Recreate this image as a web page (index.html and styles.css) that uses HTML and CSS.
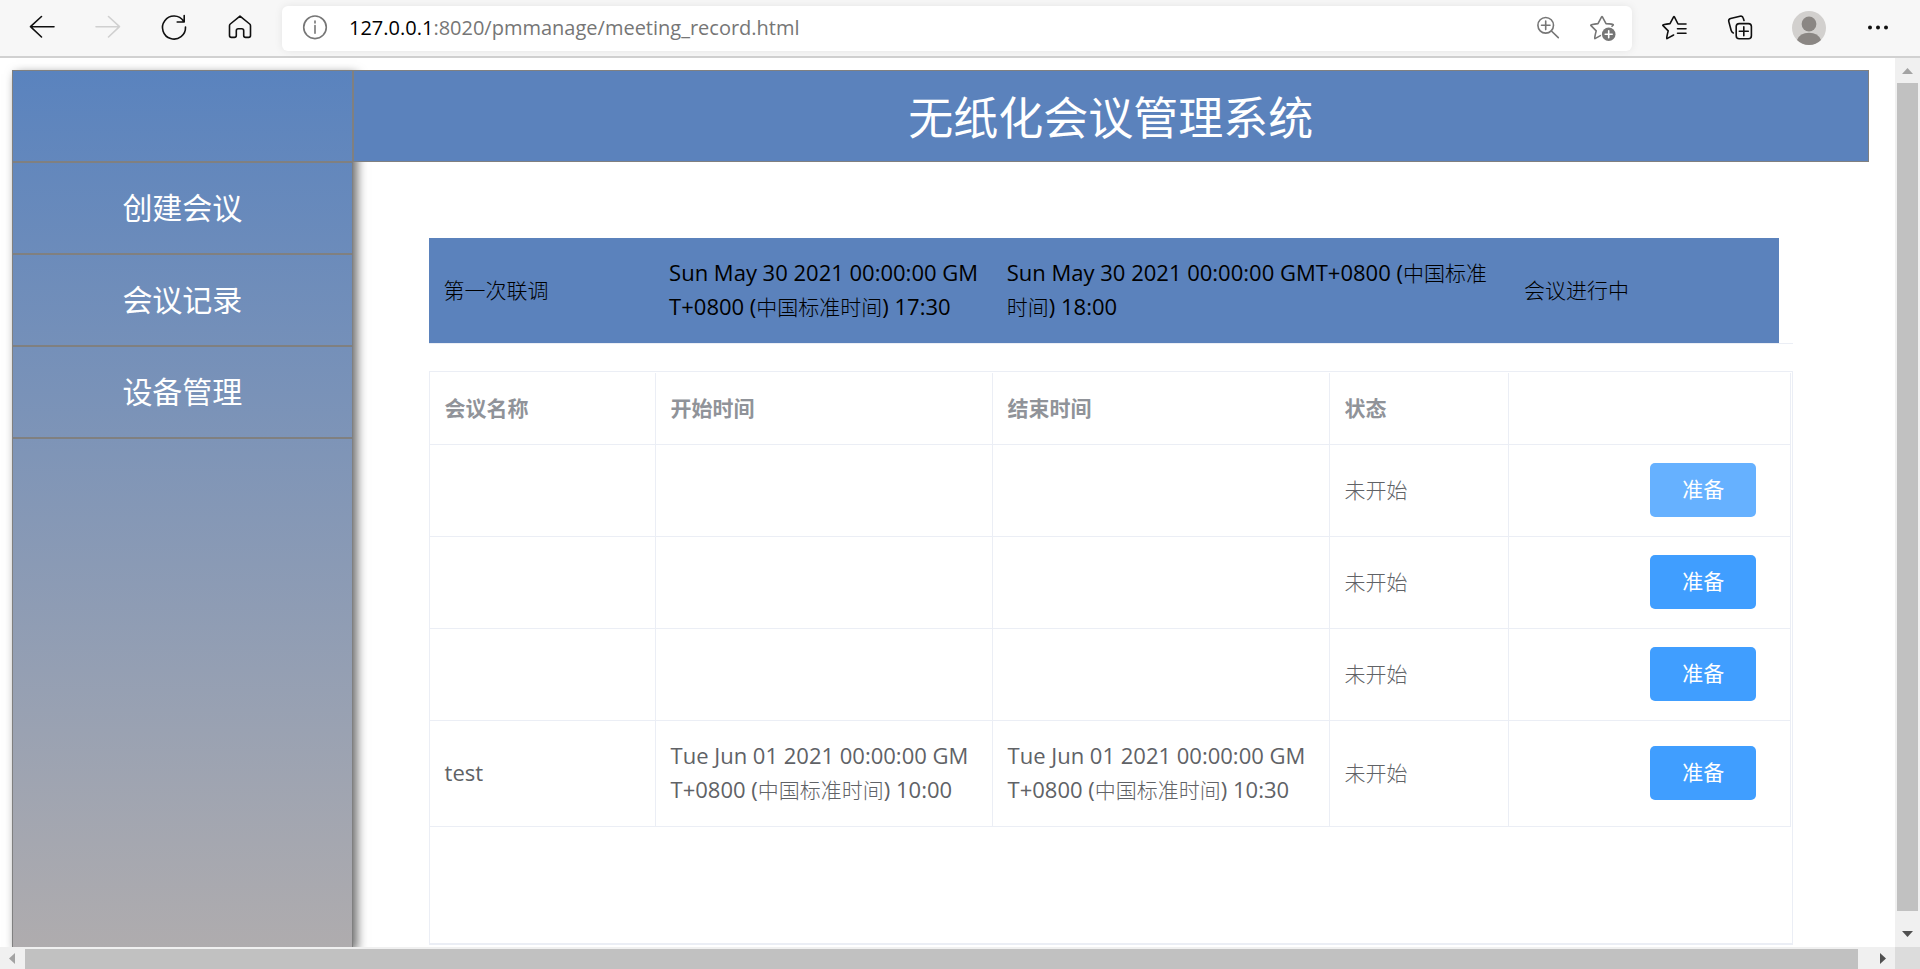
FILE: index.html
```html
<!DOCTYPE html>
<html lang="zh-CN">
<head>
<meta charset="utf-8">
<title>无纸化会议管理系统</title>
<link rel="stylesheet" href="styles.css">
</head>
<body>
<div class="toolbar">
  <button class="tool" aria-label="后退"><svg class="icon" viewBox="0 0 36 36"><path d="M30 16.7H6.5M17.5 6.5L6.5 16.7L17.5 27"/></svg></button>
  <button class="tool tool-off" aria-label="前进"><svg class="icon" viewBox="0 0 36 36"><path d="M6 16.7H29.5M18.5 6.5L29.5 16.7L18.5 27"/></svg></button>
  <button class="tool" aria-label="刷新"><svg class="icon" viewBox="0 0 36 36"><path d="M29.5 17A11.5 11.5 0 1 1 27.6 11.2M28.2 5.5V12H21.2"/></svg></button>
  <button class="tool" aria-label="主页"><svg class="icon" viewBox="0 0 36 36"><path d="M18 6.2L8.3 14Q7.5 14.7 7.5 15.7V25.5Q7.5 27.4 9.4 27.4H12.4Q14.3 27.4 14.3 25.5V20.7Q14.3 18.8 16.2 18.8H19.8Q21.7 18.8 21.7 20.7V25.5Q21.7 27.4 23.6 27.4H26.6Q28.5 27.4 28.5 25.5V15.7Q28.5 14.7 27.7 14Z"/></svg></button>
  <div class="address">
    <svg class="icon icon-gray" viewBox="0 0 36 36"><circle cx="18" cy="17.3" r="11.3"/><path d="M18 15.5V23.3M18 11V13"/></svg>
    <div class="url"><span class="host">127.0.0.1</span>:8020/pmmanage/meeting_record.html</div>
    <button class="tool tool-in" aria-label="缩放"><svg class="icon" viewBox="0 0 36 36"><circle cx="15.7" cy="15.3" r="7.8"/><path d="M21.4 21L28.3 27.6M11.5 15.3H20M15.7 11V19.6"/></svg></button>
    <button class="tool tool-in" aria-label="收藏"><svg class="icon" viewBox="0 0 36 36"><path d="M16.4 25.6L11 28.6Q10.2 28.6 12.2 20.9L6.8 15.4Q6.3 14.4 14 13.6L17.6 6.9Q18 6.3 18.4 6.9L22 13.6Q29.5 14 29.3 15L28 16.3"/><circle class="solid" cx="24.7" cy="24.3" r="6.8"/><path class="cut" d="M21.2 24.3H28.2M24.7 20.8V27.8"/></svg></button>
  </div>
  <button class="tool" aria-label="收藏夹"><svg class="icon" viewBox="0 0 36 36"><path d="M17.6 25L11 28.6Q10.2 28.6 12.2 20.9L6.8 15.4Q6.3 14.4 14 13.6L17.6 6.9Q18 6.3 18.4 6.9L22 14H30M21.5 18.7H30M21.5 23.3H30"/></svg></button>
  <button class="tool" aria-label="集锦"><svg class="icon" viewBox="0 0 36 36"><rect x="14.2" y="13.6" width="15.2" height="15.2" rx="3"/><path d="M21.8 16.8V25.8M17.3 21.3H26.3M22 10.500L21.2 8Q20.6 5.6 18 6.2L8.6 8.5Q6.2 9.2 6.8 11.6L9.2 20.5Q9.7 22.3 11.3 23"/></svg></button>
  <button class="tool tool-user" aria-label="个人资料"><svg class="icon avatar" viewBox="0 0 36 36"><circle class="face" cx="18" cy="18" r="17"/><circle class="person" cx="18" cy="14" r="7.4"/><path class="person" d="M6 30Q9 22.8 18 22.8T30 30Q25 35 18 35T6 30Z"/></svg></button>
  <button class="tool" aria-label="更多"><svg class="icon" viewBox="0 0 36 36"><g class="dots"><circle cx="10" cy="17.6" r="2"/><circle cx="18" cy="17.6" r="2"/><circle cx="26" cy="17.6" r="2"/></g></svg></button>
</div>
<div class="window">
  <div class="page">
    <nav class="side">
      <div class="side-item"></div>
      <a class="side-item" href="#create">创建会议</a>
      <a class="side-item" href="#record">会议记录</a>
      <a class="side-item" href="#device">设备管理</a>
    </nav>
    <main class="main">
      <h1 class="title">无纸化会议管理系统</h1>
      <div class="content">
        <div class="current">
          <table class="current-table">
            <colgroup><col class="cur-name"><col class="cur-start"><col class="cur-end"><col></colgroup>
            <tr>
              <td>第一次联调</td>
              <td><span class="latin">Sun May 30 2021 00:00:00 GM<br>T+0800 (</span>中国标准时间<span class="latin">) 17:30</span></td>
              <td><span class="latin">Sun May 30 2021 00:00:00 GMT+0800 (</span>中国标准<br>时间<span class="latin">) 18:00</span></td>
              <td>会议进行中</td>
            </tr>
          </table>
        </div>
        <div class="records">
          <table class="record-table">
            <colgroup><col class="rec-name"><col class="rec-time"><col class="rec-time"><col class="rec-state"><col></colgroup>
            <thead>
              <tr><th>会议名称</th><th>开始时间</th><th>结束时间</th><th>状态</th><th></th></tr>
            </thead>
            <tbody>
              <tr><td></td><td></td><td></td><td>未开始</td><td class="action"><button class="prepare prepare-hover">准备</button></td></tr>
              <tr><td></td><td></td><td></td><td>未开始</td><td class="action"><button class="prepare">准备</button></td></tr>
              <tr><td></td><td></td><td></td><td>未开始</td><td class="action"><button class="prepare">准备</button></td></tr>
              <tr>
                <td><span class="latin">test</span></td>
                <td><span class="latin">Tue Jun 01 2021 00:00:00 GM<br>T+0800 (</span>中国标准时间<span class="latin">) 10:00</span></td>
                <td><span class="latin">Tue Jun 01 2021 00:00:00 GM<br>T+0800 (</span>中国标准时间<span class="latin">) 10:30</span></td>
                <td>未开始</td>
                <td class="action"><button class="prepare">准备</button></td>
              </tr>
            </tbody>
          </table>
        </div>
      </div>
    </main>
  </div>
  <div class="scroll scroll-v">
    <svg class="arrow arrow-dim" viewBox="0 0 25 25"><path d="M7 16L12.500 10L18 16Z"/></svg>
    <div class="thumb"></div>
    <svg class="arrow" viewBox="0 0 25 25"><path d="M7 9L12.500 15L18 9Z"/></svg>
  </div>
  <div class="scroll scroll-h">
    <svg class="arrow arrow-dim" viewBox="0 0 25 25"><path d="M15 6L9 11.500L15 17Z"/></svg>
    <div class="thumb"></div>
    <svg class="arrow" viewBox="0 0 25 25"><path d="M10 6L16 11.500L10 17Z"/></svg>
  </div>
  <div class="corner"></div>
</div>
</body>
</html>
```
FILE: styles.css
```css
* {
  box-sizing: border-box;
}

body {
  margin: 0;
  height: 100vh;
  display: flex;
  flex-direction: column;
  overflow: hidden;
  background: #fff;
  font-family: "Open Sans", "Noto Sans CJK SC", sans-serif;
  font-size: 21px;
}

button {
  border: 0;
  padding: 0;
  background: none;
  font: inherit;
}

/* Browser toolbar */
.toolbar {
  flex: none;
  display: flex;
  align-items: center;
  height: 58px;
  padding: 0 9px;
  background: #f7f7f7;
  border-bottom: 2px solid #d1d1d1;
}

.tool {
  flex: none;
  display: flex;
  justify-content: center;
  width: 66px;
  color: #101010;
}

.tool-off {
  color: #d0d0d0;
}

.tool-in {
  width: 54px;
  color: #767676;
}

.tool-user {
  width: 72px;
}

.icon {
  flex: none;
  display: block;
  width: 36px;
  height: 36px;
  fill: none;
  stroke: currentColor;
  stroke-width: 1.6;
  stroke-linecap: round;
  stroke-linejoin: round;
}

.icon-gray {
  color: #767676;
}

.icon .solid,
.icon .dots {
  fill: currentColor;
  stroke: none;
}

.icon .cut {
  stroke: #fff;
}

.icon .face {
  fill: #d2d0ce;
  stroke: none;
}

.icon .person {
  fill: #8a8683;
  stroke: none;
}

.address {
  flex: 1;
  display: flex;
  align-items: center;
  height: 45px;
  margin: 0 9px;
  padding: 0 3px 0 15px;
  background: #fff;
  border-radius: 6px;
  box-shadow: 0 0 8px rgba(0, 0, 0, 0.08);
}

.url {
  flex: 1;
  padding: 0 0 2px 16px;
  font-size: 20px;
  color: #767676;
}

.host {
  color: #000;
}

/* Page area and its scroll bars */
.window {
  flex: 1;
  min-height: 0;
  display: grid;
  grid-template-columns: minmax(0, 1fr) 25px;
  grid-template-rows: minmax(0, 1fr) 22px;
}

.page {
  display: flex;
  padding: 12px 26px 0 12px;
  overflow: hidden;
}

.scroll {
  display: flex;
  background: #f0f0f0;
}

.scroll-v {
  flex-direction: column;
}

.scroll-v .thumb {
  flex: 1;
  margin: 0 2px 11px;
}

.scroll-h .thumb {
  flex: 1;
  margin: 2px 12px 0 0;
}

.thumb {
  background: #c1c1c1;
}

.arrow {
  flex: none;
  width: 25px;
  height: 25px;
  fill: #505050;
}

.arrow-dim {
  fill: #a3a3a3;
}

.corner {
  background: #dcdcdc;
}

/* Side menu */
.side {
  flex: none;
  width: 18.35%;
  border: 1px solid #808080;
  border-bottom: 0;
  background: linear-gradient(#5a83be, #afacae);
  box-shadow: 4px 4px 10px rgba(0, 0, 0, 0.6);
}

.side-item {
  display: flex;
  align-items: center;
  justify-content: center;
  height: 92px;
  padding-bottom: 4px;
  border-bottom: 2px solid #808080;
  color: #fff;
  font-size: 30px;
  text-decoration: none;
}

/* Main column */
.main {
  position: relative;
  flex: 1;
  min-width: 0;
  display: flex;
  flex-direction: column;
}

.title {
  flex: none;
  display: flex;
  align-items: center;
  justify-content: center;
  height: 92px;
  margin: 0;
  padding-bottom: 2px;
  border: 1px solid #808080;
  background: #5b82bc;
  color: #fff;
  font-size: 45px;
  font-weight: 400;
}

.content {
  flex: 1;
  display: flex;
  flex-direction: column;
  padding: 76px 5% 2px;
}

.latin {
  font-size: 22px;
  font-weight: 400;
  line-height: 1;
}

table {
  width: 100%;
  table-layout: fixed;
  border-collapse: separate;
  border-spacing: 0;
}

th,
td {
  padding: 0 15px 2px;
  font-weight: 300;
  line-height: 34px;
  text-align: left;
  vertical-align: middle;
  white-space: nowrap;
}

.current {
  padding-right: 14px;
  margin-bottom: 27px;
  border-bottom: 1px solid #ebeef5;
}

.current-table {
  background: #5b82bc;
  color: #000;
}

.current-table td {
  height: 105px;
}

.cur-name {
  width: 16.7%;
}

.cur-start {
  width: 25%;
}

.cur-end {
  width: 38.3%;
}

.records {
  flex: 1;
  padding: 1px 1px 0 0;
  border: 1px solid #ebeef5;
  border-bottom-width: 2px;
}

.record-table {
  color: #606266;
}

.record-table th,
.record-table td {
  border-right: 1px solid #ebeef5;
  border-bottom: 1px solid #ebeef5;
}

.record-table th {
  height: 72px;
  color: #909399;
  font-weight: 700;
}

.record-table td {
  height: 92px;
}

.record-table tbody tr:last-child td {
  height: 106px;
}

.rec-name {
  width: 16.6%;
}

.rec-time {
  width: 24.75%;
}

.rec-state {
  width: 13.2%;
}

.record-table .action {
  padding-right: 34px;
  text-align: right;
}

.prepare {
  display: inline-block;
  height: 54px;
  padding: 0 32px 2px;
  border-radius: 5px;
  background: #409eff;
  color: #fff;
  font-weight: 400;
  line-height: 52px;
  vertical-align: middle;
}

.prepare-hover {
  background: #66b1ff;
}
```
